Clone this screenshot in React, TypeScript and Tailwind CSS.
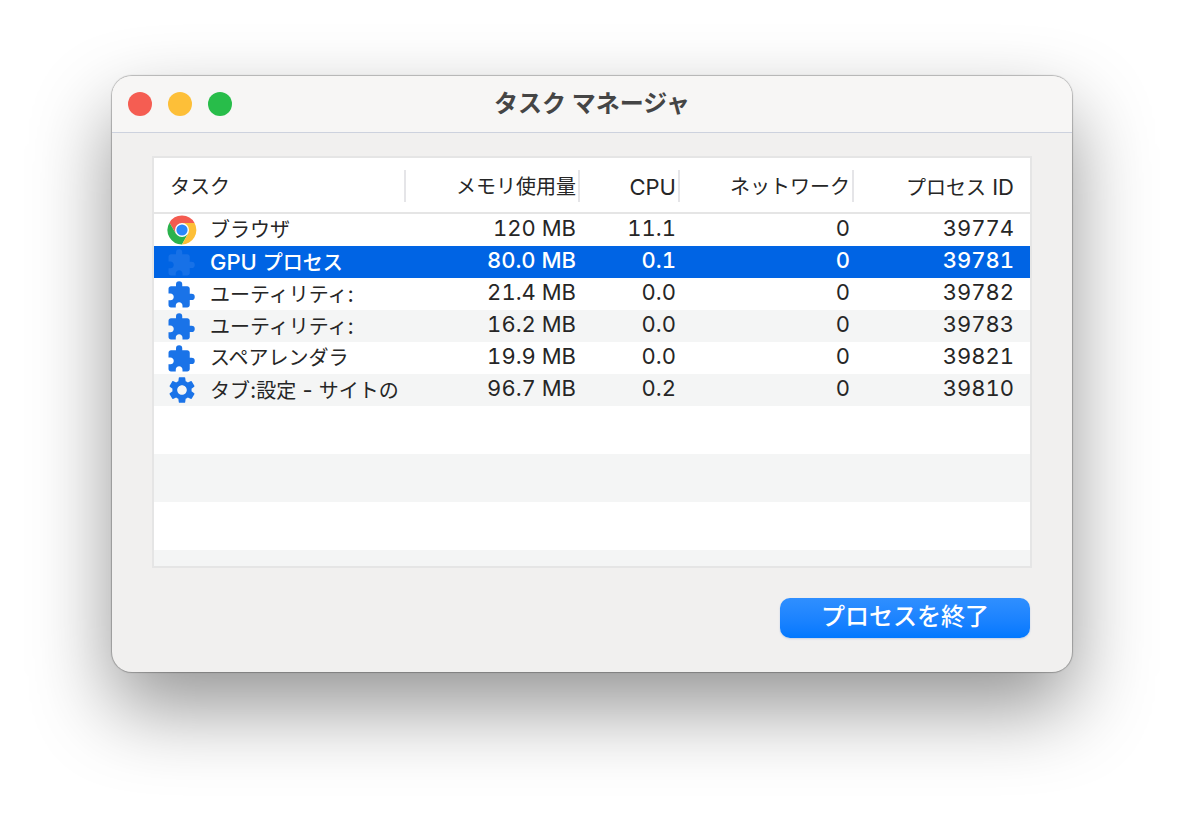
import { Fragment } from "react";
import clsx from "clsx";
import { MdExtension, MdSettings } from "react-icons/md";

type IconKind = "chrome" | "extension" | "settings";

interface Task {
  pid: string;
  name: string;
  icon: IconKind;
  memory: string;
  cpu: string;
  network: string;
}

const TASKS: Task[] = [
  { pid: "39774", name: "ブラウザ", icon: "chrome", memory: "120 MB", cpu: "11.1", network: "0" },
  { pid: "39781", name: "GPU プロセス", icon: "extension", memory: "80.0 MB", cpu: "0.1", network: "0" },
  { pid: "39782", name: "ユーティリティ:", icon: "extension", memory: "21.4 MB", cpu: "0.0", network: "0" },
  { pid: "39783", name: "ユーティリティ:", icon: "extension", memory: "16.2 MB", cpu: "0.0", network: "0" },
  { pid: "39821", name: "スペアレンダラ", icon: "extension", memory: "19.9 MB", cpu: "0.0", network: "0" },
  { pid: "39810", name: "タブ:設定 - サイトの", icon: "settings", memory: "96.7 MB", cpu: "0.2", network: "0" },
];

const COLUMNS = [
  { label: "タスク", width: "w-[252px]", cell: "pl-4 text-left" },
  { label: "メモリ使用量", width: "w-[174px]", cell: "pr-1 text-right" },
  { label: "CPU", width: "w-[100px]", cell: "pr-1 text-right" },
  { label: "ネットワーク", width: "w-[174px]", cell: "pr-1 text-right" },
  { label: "プロセス ID", width: "w-[176px]", cell: "pr-4 text-right" },
];

const SELECTED_PID = "39781";

function ChromeIcon() {
  return (
    <svg viewBox="0 0 32 32" className="size-8" aria-hidden="true">
      <circle cx="16" cy="16" r="14.5" fill="#fff" />
      <path d="M16 16 L9.9 19.5 L3.44 8.75 A14.5 14.5 0 0 1 28.56 9 L16 9 Z" fill="#f45b50" />
      <path d="M3.44 8.75 A14.5 14.5 0 0 0 16 30.5 L22.1 19.5 L16 16 L9.9 19.5 Z" fill="#2bb24c" />
      <path d="M28.56 9 A14.5 14.5 0 0 1 16 30.5 L22.1 19.5 L16 16 L16 9 Z" fill="#fdbf37" />
      <circle cx="16" cy="16" r="7" fill="#fff" />
      <circle cx="16" cy="16" r="5.6" fill="#2b87fb" />
    </svg>
  );
}

function TaskIcon({ kind }: { kind: IconKind }) {
  if (kind === "chrome") return <ChromeIcon />;
  if (kind === "settings") return <MdSettings size={32} color="#1a73e8" />;
  return <MdExtension size={30} color="#1a73e8" />;
}

// Latin runs are set a step larger than the kana beside them
function Label({ text }: { text: string }) {
  return (
    <>
      {text.split(/([ -~]+)/).map((part, i) =>
        i % 2 ? (
          <span key={i} className="text-[22px]">
            {part}
          </span>
        ) : (
          <Fragment key={i}>{part}</Fragment>
        ),
      )}
    </>
  );
}

function TitleBar() {
  return (
    <header className="grid h-[57px] grid-cols-[1fr_auto_1fr] items-center rounded-t-[20px] border-b border-[#cdd2de] bg-[#f7f6f5] px-4">
      <div className="flex gap-4">
        <button type="button" aria-label="閉じる" className="size-6 rounded-full bg-[#f55d52]" />
        <button type="button" aria-label="しまう" className="size-6 rounded-full bg-[#fdbf38]" />
        <button type="button" aria-label="拡大" className="size-6 rounded-full bg-[#28bd4a]" />
      </div>
      <h1 className="text-[24px] leading-8 font-bold text-[#454545]">タスク マネージャ</h1>
    </header>
  );
}

function TaskTable() {
  return (
    <table className="w-full table-fixed border-separate border-spacing-0 text-[20px] text-[#262626]">
      <thead>
        <tr>
          {COLUMNS.map((column, i) => (
            <th
              key={column.label}
              scope="col"
              className={clsx(
                "relative h-14 border-b-2 border-[#e5e5e5] p-0 pt-1 leading-8 font-normal whitespace-nowrap",
                column.width,
                column.cell,
              )}
            >
              <Label text={column.label} />
              {i < COLUMNS.length - 1 && (
                <span className="absolute top-3 right-0 h-8 w-0.5 bg-[#e5e5e8]" />
              )}
            </th>
          ))}
        </tr>
      </thead>
      <tbody>
        {TASKS.map((task) => {
          const selected = task.pid === SELECTED_PID;
          return (
            <tr
              key={task.pid}
              aria-selected={selected}
              className={clsx(
                selected ? "bg-[#0064e4] font-medium text-white" : "odd:bg-white even:bg-[#f4f5f5]",
              )}
            >
              <td className="h-8 p-0 pl-3">
                <div className="flex h-8 items-center gap-3">
                  <span
                    className={clsx(
                      "flex w-8 shrink-0",
                      task.icon === "extension" && "pt-0.5",
                      selected && "opacity-90",
                    )}
                  >
                    <TaskIcon kind={task.icon} />
                  </span>
                  <span className="leading-8 whitespace-nowrap">
                    <Label text={task.name} />
                  </span>
                </div>
              </td>
              {[task.memory, task.cpu, task.network].map((value, i) => (
                <td key={i} className="h-8 p-0 pr-1 text-right align-top text-[22px] leading-7 tabular-nums">
                  {value}
                </td>
              ))}
              <td className="h-8 p-0 pr-4 text-right align-top text-[22px] leading-7 tabular-nums">
                {task.pid}
              </td>
            </tr>
          );
        })}
      </tbody>
    </table>
  );
}

export default function App() {
  return (
    <main className="min-h-screen bg-white px-28 pt-[76px] pb-[148px] font-['Inter','Noto_Sans_CJK_JP',sans-serif]">
      <section className="rounded-[20px] bg-[#f1f0ef] shadow-[0_0_1px_1px_rgba(0,0,0,0.25),0_36px_80px_rgba(0,0,0,0.42)]">
        <TitleBar />
        <div className="px-10 pt-[23px] pb-[34px]">
          <div className="border-2 border-[#e5e5e5] bg-white">
            <TaskTable />
            {/* empty rows keep the striping going to the bottom of the list */}
            <div aria-hidden="true">
              <div className="h-12" />
              <div className="h-12 bg-[#f4f5f5]" />
              <div className="h-12" />
              <div className="h-4 bg-[#f4f5f5]" />
            </div>
          </div>
          <div className="mt-[30px] flex justify-end px-0.5">
            <button
              type="button"
              className="h-10 w-[250px] rounded-[10px] bg-linear-to-b from-[#2f8fff] to-[#0078ff] pb-0.5 text-[24px] leading-8 font-medium text-white shadow-[0_1px_2px_rgba(0,80,200,0.2)]"
            >
              プロセスを終了
            </button>
          </div>
        </div>
      </section>
    </main>
  );
}
